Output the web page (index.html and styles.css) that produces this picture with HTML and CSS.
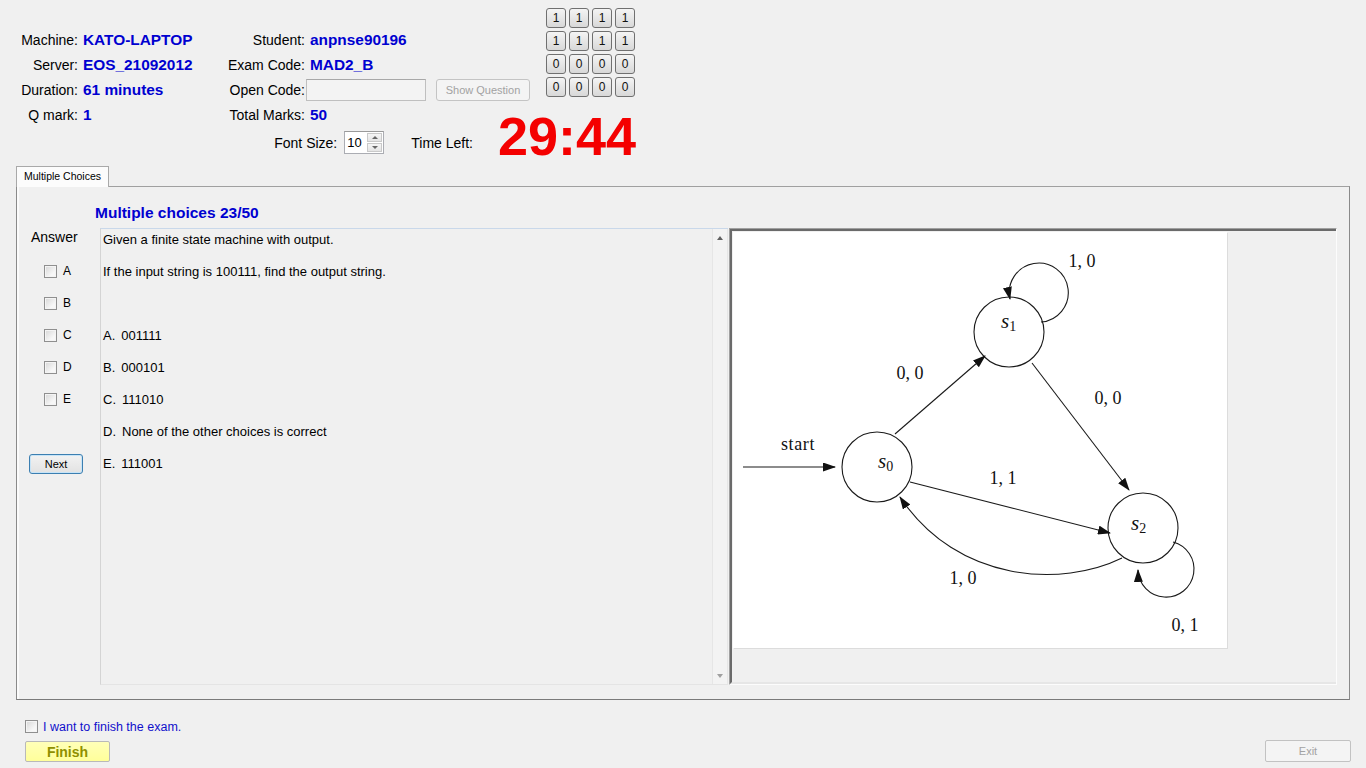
FILE: index.html
```html
<!DOCTYPE html>
<html lang="en">
<head>
<meta charset="utf-8">
<title>Exam Client</title>
<link rel="stylesheet" href="styles.css">
</head>
<body>
<div class="page">
  <header class="header">
    <div class="info">
      <span class="lbl">Machine:</span><span class="val">KATO-LAPTOP</span><span class="lbl lbl2">Student:</span><span class="val val2">anpnse90196</span>
      <span class="lbl">Server:</span><span class="val">EOS_21092012</span><span class="lbl lbl2">Exam Code:</span><span class="val val2">MAD2_B</span>
      <span class="lbl">Duration:</span><span class="val">61 minutes</span><span class="lbl lbl2">Open Code:</span><span class="opencode"><span class="textbox"></span><span class="btn-show">Show Question</span></span>
      <span class="lbl">Q mark:</span><span class="val">1</span><span class="lbl lbl2">Total Marks:</span><span class="val val2">50</span>
    </div>
    <div class="keys">
      <span class="key">1</span><span class="key">1</span><span class="key">1</span><span class="key">1</span>
      <span class="key">1</span><span class="key">1</span><span class="key">1</span><span class="key">1</span>
      <span class="key">0</span><span class="key">0</span><span class="key">0</span><span class="key">0</span>
      <span class="key">0</span><span class="key">0</span><span class="key">0</span><span class="key">0</span>
    </div>
    <div class="fontrow">
      <span class="fs-label">Font Size:</span>
      <span class="spinner"><span class="spin-val">10</span><span class="spin-btns"><span class="spin-b"><i class="tri-up"></i></span><span class="spin-b"><i class="tri-down"></i></span></span></span>
      <span class="tl-label">Time Left:</span>
    </div>
    <div class="clock">29:44</div>
  </header>

  <div class="tabs"><div class="tab">Multiple Choices</div></div>
  <section class="panel">
    <h2 class="qtitle">Multiple choices 23/50</h2>
    <div class="content">
      <div class="answers">
        <div class="answer-label">Answer</div>
        <ul class="options">
          <li><span class="cb"></span><span>A</span></li>
          <li><span class="cb"></span><span>B</span></li>
          <li><span class="cb"></span><span>C</span></li>
          <li><span class="cb"></span><span>D</span></li>
          <li><span class="cb"></span><span>E</span></li>
        </ul>
        <button class="next">Next</button>
      </div>
      <div class="question">
        <div class="qtext">
          <p>Given a finite state machine with output.</p>
          <p>If the input string is 100111, find the output string.</p>
          <p>&nbsp;</p>
          <p>A.<span class="gap"> </span>001111</p>
          <p>B.<span class="gap"> </span>000101</p>
          <p>C.<span class="gap"> </span>111010</p>
          <p>D.<span class="gap"> </span>None of the other choices is correct</p>
          <p>E.<span class="gap"> </span>111001</p>
        </div>
        <div class="vscroll"><i class="sarr-up"></i><i class="sarr-down"></i></div>
      </div>
      <div class="figure">
        <div class="figure-inner">
          <svg class="fsm" width="494" height="416" viewBox="0 0 494 416">
            <defs>
              <marker id="ah" markerWidth="13" markerHeight="9" refX="12" refY="4.5" orient="auto" markerUnits="userSpaceOnUse">
                <path d="M0 0 L13 4.5 L0 9 z" fill="#111"/>
              </marker>
            </defs>
            <g fill="none" stroke="#1a1a1a" stroke-width="1.1">
              <circle cx="144" cy="235" r="35"/>
              <circle cx="276" cy="100" r="35"/>
              <circle cx="410" cy="296" r="35"/>
              <path d="M10 235 H102" marker-end="url(#ah)"/>
              <path d="M162 202 L252 124" marker-end="url(#ah)"/>
              <path d="M299 131 L396 258" marker-end="url(#ah)"/>
              <path d="M177 250 L377 301" marker-end="url(#ah)"/>
              <path d="M389 326 C330 355 225 352 167 265" marker-end="url(#ah)"/>
              <path d="M308 90 A29.5 29.5 0 1 0 277 67" marker-end="url(#ah)"/>
              <path d="M440 310 A28 28 0 1 1 405 338" marker-end="url(#ah)"/>
            </g>
            <g font-family="'Liberation Serif', 'DejaVu Serif', serif" font-size="18" fill="#111" text-anchor="middle">
              <text x="349" y="35">1, 0</text>
              <text x="177" y="147">0, 0</text>
              <text x="375" y="172">0, 0</text>
              <text x="65" y="218" letter-spacing="0.6">start</text>
              <text x="270" y="252">1, 1</text>
              <text x="230" y="352">1, 0</text>
              <text x="452" y="399">0, 1</text>
            </g>
            <g font-family="'Liberation Serif', 'DejaVu Serif', serif" fill="#111">
              <text x="145" y="236" font-size="21" font-style="italic">s<tspan font-style="normal" font-size="14" dy="3">0</tspan></text>
              <text x="268" y="96" font-size="21" font-style="italic">s<tspan font-style="normal" font-size="14" dy="3">1</tspan></text>
              <text x="398" y="298" font-size="21" font-style="italic">s<tspan font-style="normal" font-size="14" dy="3">2</tspan></text>
            </g>
          </svg>
        </div>
      </div>
    </div>
  </section>

  <footer class="bottom">
    <div class="finish-col">
      <label class="confirm"><span class="cb"></span><span class="confirm-text">I want to finish the exam.</span></label>
      <button class="finish">Finish</button>
    </div>
    <button class="exit" disabled>Exit</button>
  </footer>
</div>
</body>
</html>
```

FILE: styles.css
```css
* { box-sizing: border-box; }

body {
  margin: 0;
  background: #f0f0f0;
  font-family: "Liberation Sans", Arial, sans-serif;
  color: #000;
}

.page {
  width: 1366px;
  height: 768px;
  overflow: hidden;
}

/* ---------- header ---------- */
.header {
  height: 166px;
  display: grid;
  grid-template-columns: 495px 141px;
  grid-template-rows: 98px 30px 38px;
}

.info {
  grid-column: 1 / 3;
  grid-row: 1 / 3;
  padding-top: 27px;
  display: grid;
  grid-template-columns: 78px 147px 81px 1fr;
  grid-auto-rows: 25px;
  align-items: center;
  font-size: 14px;
}

.lbl { text-align: right; white-space: nowrap; }
.lbl2 { padding-right: 1px; }

.val {
  padding-left: 5px;
  font-weight: bold;
  font-size: 15.4px;
  color: #0000d0;
  white-space: nowrap;
}
.val2 { padding-left: 4px; }

.opencode {
  display: flex;
  align-items: center;
  gap: 10px;
}

.textbox {
  width: 120px;
  height: 22px;
  border: 1px solid #bfbfbf;
  border-top-color: #a8a8a8;
  background: #f3f3f3;
}

.btn-show {
  width: 94px;
  height: 22px;
  border: 1px solid #c4c4c4;
  border-radius: 3px;
  background: #f4f4f4;
  color: #a2a2a2;
  font-size: 11px;
  display: flex;
  align-items: center;
  justify-content: center;
}

.keys {
  grid-column: 2;
  grid-row: 1;
  justify-self: end;
  align-self: start;
  margin-top: 8px;
  margin-right: 1px;
  display: grid;
  grid-template-columns: repeat(4, 20px);
  grid-auto-rows: 20px;
  gap: 3px;
}

.key {
  border: 1px solid #707070;
  border-radius: 3px;
  background: linear-gradient(#f4f4f4, #e6e6e6 50%, #d8d8d8);
  font-size: 12px;
  display: flex;
  align-items: center;
  justify-content: center;
  color: #111;
}

.fontrow {
  grid-column: 1;
  grid-row: 3;
  align-self: start;
  padding-top: 3px;
  padding-right: 22px;
  display: flex;
  align-items: center;
  justify-content: flex-end;
  font-size: 14px;
}

.fs-label { margin-right: 7px; }
.tl-label { margin-left: 27px; }

.spinner {
  width: 40px;
  height: 23px;
  border: 1px solid #abadb3;
  border-top-color: #9a9a9a;
  background: #fff;
  display: flex;
  align-items: stretch;
}

.spin-val {
  flex: 1;
  font-size: 13px;
  padding-left: 2px;
  display: flex;
  align-items: center;
}

.spin-btns {
  width: 16px;
  display: flex;
  flex-direction: column;
  padding: 1px 1px 1px 0;
  gap: 1px;
}

.spin-b {
  flex: 1;
  border: 1px solid #c9c9c9;
  background: linear-gradient(#f6f6f6, #e4e4e4);
  display: flex;
  align-items: center;
  justify-content: center;
}

.tri-up, .tri-down {
  width: 0;
  height: 0;
  border-left: 3px solid transparent;
  border-right: 3px solid transparent;
}
.tri-up { border-bottom: 3px solid #666; }
.tri-down { border-top: 3px solid #666; }

.clock {
  grid-column: 2;
  grid-row: 2 / 4;
  justify-self: end;
  align-self: start;
  margin-top: 11px;
  font-size: 54px;
  line-height: 54px;
  font-weight: bold;
  color: #f40000;
  white-space: nowrap;
}

/* ---------- tab + panel ---------- */
.tabs {
  height: 20px;
  margin-left: 16px;
  display: flex;
  align-items: flex-end;
}

.tab {
  position: relative;
  z-index: 1;
  width: 93px;
  height: 21px;
  margin-bottom: -1px;
  border: 1px solid #a9a9a9;
  border-bottom: none;
  background: #fcfcfc;
  font-size: 10.5px;
  padding-left: 7px;
  line-height: 19px;
  white-space: nowrap;
}

.panel {
  margin-left: 16px;
  width: 1334px;
  height: 514px;
  border: 1px solid;
  border-color: #a0a0a0 #8a8a8a #7a7a7a #8a8a8a;
  box-shadow: inset 2px 0 0 #fbfbfb;
}

.qtitle {
  margin: 0 0 6px 0;
  height: 35px;
  padding: 17px 0 0 78px;
  font-size: 15.5px;
  line-height: 18px;
  font-weight: bold;
  color: #0000d0;
}

.content {
  height: 457px;
  display: flex;
}

.answers {
  width: 83px;
  flex: none;
}

.answer-label {
  margin-top: 1px;
  padding-left: 14px;
  font-size: 14px;
  line-height: 16px;
}

.options {
  list-style: none;
  margin: 10px 0 0 0;
  padding: 0;
}

.options li {
  height: 32px;
  display: flex;
  align-items: center;
  gap: 6px;
  padding-left: 27px;
  font-size: 12px;
}

.cb {
  width: 13px;
  height: 13px;
  flex: none;
  border: 1px solid #8f8f8f;
  background: linear-gradient(135deg, #d6d6d6, #f7f7f7 70%);
  box-shadow: inset 0 0 0 1px #f4f4f4;
}

.next {
  display: block;
  margin: 39px 0 0 12px;
  width: 54px;
  height: 20px;
  padding: 0;
  border: 1px solid #3c7fb1;
  border-radius: 3px;
  background: linear-gradient(#f2f2f2, #e2e2e2);
  box-shadow: inset 0 0 0 1px #c7e4f7;
  font-family: "Liberation Sans", Arial, sans-serif;
  font-size: 11px;
  color: #000;
}

.question {
  width: 628px;
  flex: none;
  display: flex;
  border-top: 1px solid #c9d8ea;
  border-left: 1px solid #d4d4d4;
  border-bottom: 1px solid #e4e4e4;
}

.qtext {
  flex: 1;
  padding: 3px 0 0 2px;
  font-size: 13px;
  line-height: 16px;
}

.qtext p {
  margin: 0 0 16px 0;
  white-space: pre;
}

.gap {
  display: inline-block;
  width: 6px;
}

.vscroll {
  width: 16px;
  flex: none;
  border-left: 1px solid #e6e6e6;
  border-right: 1px solid #e6e6e6;
  background: #f3f3f3;
  display: flex;
  flex-direction: column;
  justify-content: space-between;
  align-items: center;
  padding: 7px 0 6px 0;
}

.sarr-up, .sarr-down {
  width: 0;
  height: 0;
  border-left: 3.5px solid transparent;
  border-right: 3.5px solid transparent;
}
.sarr-up { border-bottom: 4px solid #606060; }
.sarr-down { border-top: 4px solid #a0a0a0; }

.figure {
  width: 608px;
  flex: none;
  margin-left: 1px;
  border: 1px solid;
  border-color: #a0a0a0 #fcfcfc #fcfcfc #a0a0a0;
}

.figure-inner {
  height: 100%;
  border: 2px solid;
  border-color: #6a6a6a #e6e6e6 #e6e6e6 #6a6a6a;
  border-right: none;
}

.fsm {
  display: block;
  margin-left: 1px;
  margin-top: 1px;
  background: #fff;
  box-shadow: 1px 1px 0 #dcdcdc;
}

/* ---------- bottom ---------- */
.bottom {
  height: 68px;
  display: flex;
  justify-content: space-between;
  align-items: flex-end;
  padding: 0 15px 6px 25px;
}

.finish-col {
  display: flex;
  flex-direction: column;
  gap: 8px;
}

.confirm {
  display: flex;
  align-items: center;
  gap: 5px;
  height: 13px;
}

.confirm-text {
  font-size: 12.5px;
  color: #1010cc;
}

.finish {
  width: 85px;
  height: 21px;
  padding: 0;
  border: 1px solid #b9b9b9;
  border-radius: 2px;
  background: linear-gradient(#ffffb8, #ffff9a);
  font-family: "Liberation Sans", Arial, sans-serif;
  font-weight: bold;
  font-size: 14px;
  color: #8f8f00;
}

.exit {
  width: 86px;
  height: 22px;
  padding: 0;
  border: 1px solid #c2c2c2;
  border-radius: 2px;
  background: #f4f4f4;
  font-family: "Liberation Sans", Arial, sans-serif;
  font-size: 11px;
  color: #a3a3a3;
}
```
